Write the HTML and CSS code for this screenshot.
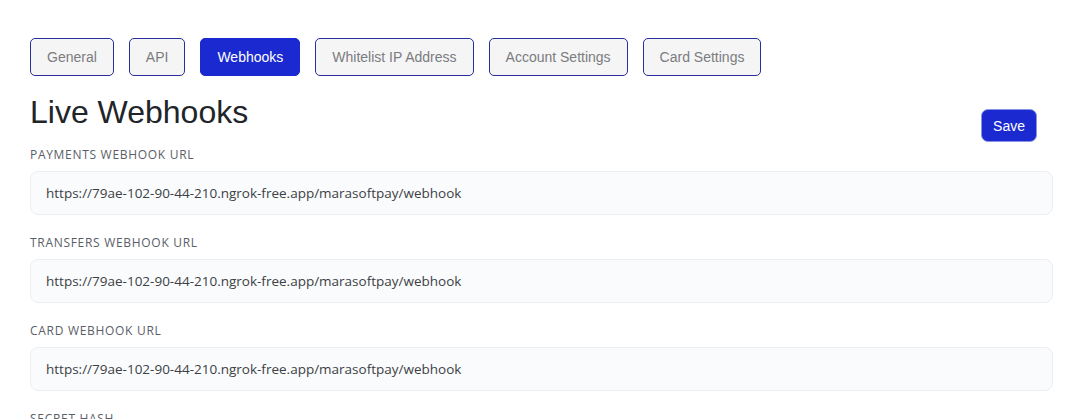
FILE: index.html
```html
<!DOCTYPE html>
<html>
<head>
<meta charset="utf-8">
<link rel="stylesheet" href="styles.css">
</head>
<body>
<div class="page">
  <nav class="tabs">
    <button class="tab">General</button>
    <button class="tab">API</button>
    <button class="tab active">Webhooks</button>
    <button class="tab">Whitelist IP Address</button>
    <button class="tab">Account Settings</button>
    <button class="tab">Card Settings</button>
  </nav>
  <div class="head">
    <h1 class="title">Live Webhooks</h1>
    <button class="save">Save</button>
  </div>
  <div class="field">
    <label class="label">Payments Webhook URL</label>
    <div class="input">https://79ae-102-90-44-210.ngrok-free.app/marasoftpay/webhook</div>
  </div>
  <div class="field">
    <label class="label">Transfers Webhook URL</label>
    <div class="input">https://79ae-102-90-44-210.ngrok-free.app/marasoftpay/webhook</div>
  </div>
  <div class="field">
    <label class="label">Card Webhook URL</label>
    <div class="input">https://79ae-102-90-44-210.ngrok-free.app/marasoftpay/webhook</div>
  </div>
  <div class="field">
    <label class="label">Secret Hash</label>
    <div class="input"></div>
  </div>
</div>
</body>
</html>
```
FILE: styles.css
```css
html, body { margin: 0; padding: 0; background: #fff; }
body { overflow: hidden; }
.page {
  padding: 38px 15px 0 30px;
  font-family: "Open Sans", "Noto Sans", sans-serif;
}
.tabs { display: flex; gap: 15px; }
.tab {
  height: 38px;
  padding: 0 16px;
  border: 1px solid #2a2f9a;
  border-radius: 5px;
  background: #f5f5f6;
  color: #7a7c80;
  font-family: "Liberation Sans", Arial, sans-serif;
  font-size: 14px;
}
.tab.active { background: #1a2ad0; border-color: #1a2ad0; color: #fff; }
.head {
  display: flex;
  justify-content: space-between;
  align-items: flex-start;
  margin: 16px 0 5px;
}
.title {
  margin: 0;
  font-family: "Liberation Sans", Arial, sans-serif;
  font-weight: 400;
  font-size: 32px;
  line-height: 40px;
  color: #212529;
}
.save {
  margin: 17px 16px 0 0;
  height: 33px;
  padding: 0 11px;
  background: #1a2ad0;
  color: #fff;
  border: 1px solid #8a93e6;
  border-radius: 7px;
  font-family: "Liberation Sans", Arial, sans-serif;
  font-size: 14px;
}
.field { display: flex; flex-direction: column; }
.label {
  font-size: 12px;
  letter-spacing: 0.7px;
  text-transform: uppercase;
  color: #5a5e66;
  line-height: 16px;
  margin: 0 0 8px;
}
.input {
  height: 42px;
  border: 1px solid #eceef2;
  border-radius: 8px;
  background: #fafbfd;
  padding: 0 15px;
  display: flex;
  align-items: center;
  font-size: 13.5px;
  color: #3c3f44;
  margin-bottom: 20px;
}
```
